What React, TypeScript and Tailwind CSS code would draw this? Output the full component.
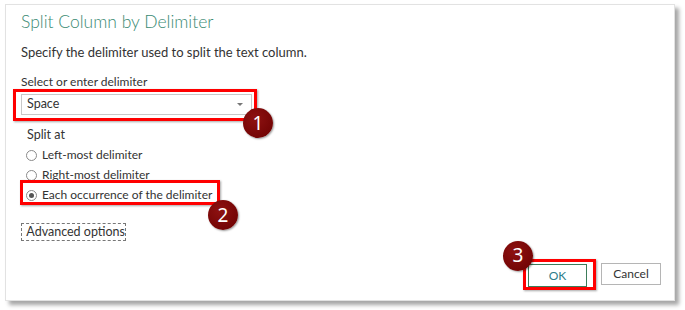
import React from "react";

const font = { fontFamily: 'Lato, "Noto Sans", sans-serif' };

function Badge({ n, className }: { n: string; className: string }) {
  return (
    <div
      className={`absolute w-[30px] h-[30px] rounded-full flex items-center justify-center text-white text-[19px] leading-none shadow-[1px_1px_2px_rgba(0,0,0,0.4)] bg-[radial-gradient(circle_at_40%_35%,#8e1212,#6a0000)] ${className}`}
      style={{ fontFamily: '"Noto Sans", sans-serif' }}
    >
      {n}
    </div>
  );
}

function Radio({ checked, label }: { checked?: boolean; label: string }) {
  return (
    <div className="flex items-center h-[20px]">
      <span className="ml-[5px] w-[11px] h-[11px] rounded-full border border-[#8a8a8a] bg-white flex items-center justify-center">
        {checked && <span className="w-[5px] h-[5px] rounded-full bg-[#555]" />}
      </span>
      <span className="ml-[5px] text-[12px] text-[#333] whitespace-nowrap">{label}</span>
    </div>
  );
}

export default function App() {
  return (
    <div className="w-[685px] h-[310px] bg-white relative" style={font}>
      <div className="absolute left-[5px] top-[4px] w-[670px] h-[297px] bg-white border border-[#e2e2e2] shadow-[4px_4px_4px_rgba(0,0,0,0.35)] flex flex-col pl-[15px]">
        <div className="pt-[3px] text-[17.5px] leading-[28px] font-light text-[#3a8a73]">
          Split Column by Delimiter
        </div>
        <div className="mt-[6px] text-[13px] leading-[20px] text-[#333]">
          Specify the delimiter used to split the text column.
        </div>
        <div className="mt-[12px] text-[12px] leading-[16px] text-[#333]">
          Select or enter delimiter
        </div>
        <div className="relative mt-[4px] w-[231px] h-[21px] border border-[#c8c8c8] bg-white flex items-center justify-between pl-[5px] pr-[8px]">
          <span className="text-[12.5px] text-[#333]">Space</span>
          <span className="w-0 h-0 border-l-[3px] border-r-[3px] border-t-[3px] border-l-transparent border-r-transparent border-t-[#777]" />
          <div className="absolute left-[-9px] top-[-6px] right-[-6px] bottom-[-7px] border-[3px] border-[#ff0000] shadow-[1px_1px_2px_rgba(0,0,0,0.35)]" />
          <Badge n="1" className="left-[221px] top-[13px]" />
        </div>
        <div className="ml-[6px] mt-[12px] text-[12.5px] leading-[16px] text-[#333]">Split at</div>
        <div className="mt-[2px] flex flex-col">
          <Radio label="Left-most delimiter" />
          <Radio label="Right-most delimiter" />
          <div className="relative">
            <Radio checked label="Each occurrence of the delimiter" />
            <div className="absolute left-[-1px] top-[-5px] w-[200px] h-[25px] border-[3px] border-[#ff0000] shadow-[1px_1px_2px_rgba(0,0,0,0.35)]" />
            <Badge n="2" className="left-[187px] top-[15px]" />
          </div>
        </div>
        <div className="mt-[18px] w-[105px] h-[18px] border border-dashed border-[#777] flex items-center text-[12.5px] text-[#333] whitespace-nowrap">
          <svg width="5" height="9" viewBox="0 0 5 9" className="ml-[1px]">
            <path d="M0.5 0.5 L4.5 4.5 L0.5 8.5 Z" fill="white" stroke="#777" strokeWidth="1" />
          </svg>
          <span className="ml-[3px]">Advanced options</span>
        </div>
        <div className="mt-auto mb-[13px] mr-[13px] flex justify-end gap-[14px]">
          <div className="relative">
            <button className="w-[59px] h-[23px] border border-[#3d7d5a] bg-white text-[12px] text-[#2e7d8a]">OK</button>
            <div className="absolute left-[-5px] top-[-3px] w-[73px] h-[31px] border-[3px] border-[#ff0000] shadow-[1px_1px_2px_rgba(0,0,0,0.35)]" />
            <Badge n="3" className="left-[-25px] top-[-21px]" />
          </div>
          <button className="w-[60px] h-[22px] mt-[1px] border border-[#b5b5b5] bg-white text-[12px] text-[#333]">Cancel</button>
        </div>
      </div>
    </div>
  );
}
